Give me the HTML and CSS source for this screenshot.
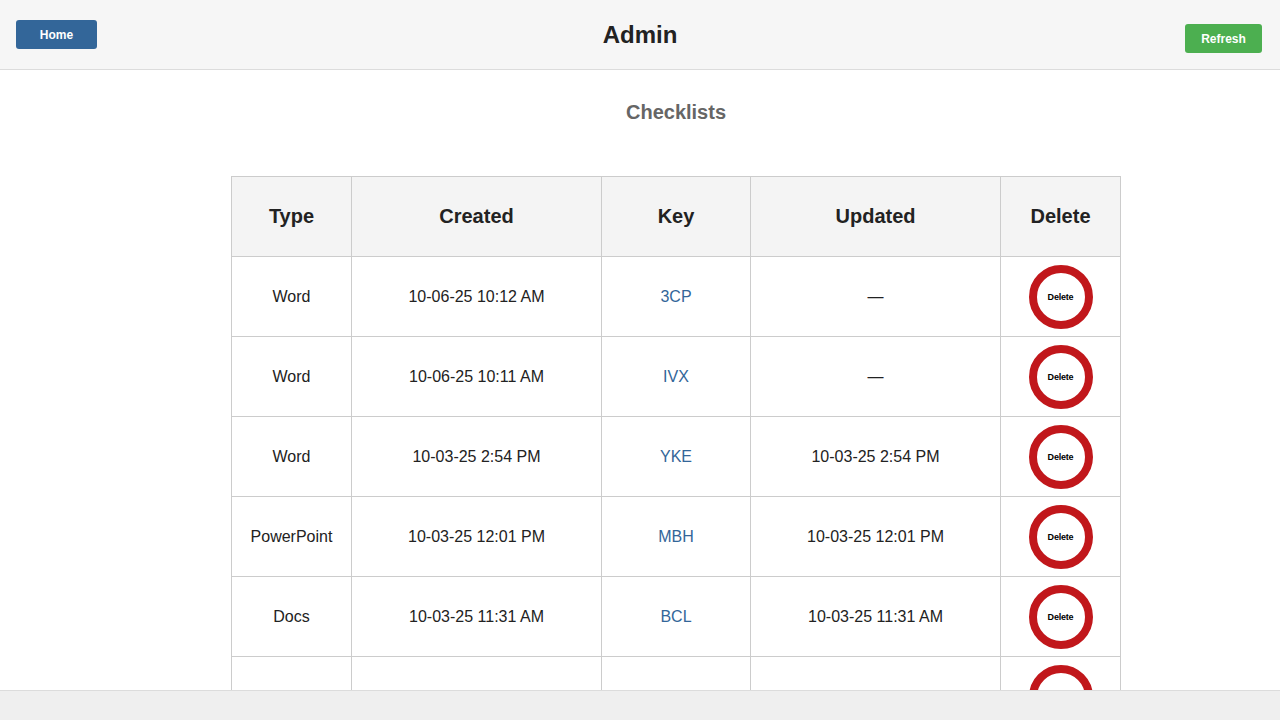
FILE: index.html
```html
<!DOCTYPE html>
<html>
<head>
<meta charset="utf-8">
<link rel="stylesheet" href="styles.css">
</head>
<body>
<header class="topbar">
  <button class="btn btn-home">Home</button>
  <h1 class="title">Admin</h1>
  <button class="btn btn-refresh">Refresh</button>
</header>
<main class="content">
  <h2 class="section-title">Checklists</h2>
  <table class="grid">
    <thead>
      <tr><th class="c-type">Type</th><th class="c-created">Created</th><th class="c-key">Key</th><th class="c-updated">Updated</th><th class="c-del">Delete</th></tr>
    </thead>
    <tbody>
      <tr><td>Word</td><td>10-06-25 10:12 AM</td><td class="key">3CP</td><td>—</td><td><button class="del">Delete</button></td></tr>
      <tr><td>Word</td><td>10-06-25 10:11 AM</td><td class="key">IVX</td><td>—</td><td><button class="del">Delete</button></td></tr>
      <tr><td>Word</td><td>10-03-25 2:54 PM</td><td class="key">YKE</td><td>10-03-25 2:54 PM</td><td><button class="del">Delete</button></td></tr>
      <tr><td>PowerPoint</td><td>10-03-25 12:01 PM</td><td class="key">MBH</td><td>10-03-25 12:01 PM</td><td><button class="del">Delete</button></td></tr>
      <tr><td>Docs</td><td>10-03-25 11:31 AM</td><td class="key">BCL</td><td>10-03-25 11:31 AM</td><td><button class="del">Delete</button></td></tr>
      <tr><td></td><td></td><td class="key"></td><td></td><td><button class="del">Delete</button></td></tr>
    </tbody>
  </table>
</main>
<footer class="footer"></footer>
</body>
</html>
```
FILE: styles.css
```css
* { box-sizing: border-box; }
html, body { margin: 0; padding: 0; }
body {
  font-family: "Liberation Sans", Arial, sans-serif;
  color: #222;
  background: #fff;
  height: 720px;
  overflow: hidden;
}
.topbar {
  height: 70px;
  background: #f6f6f6;
  border-bottom: 1px solid #dcdcdc;
  display: flex;
  align-items: flex-start;
  justify-content: space-between;
  padding: 0 18px 0 16px;
  position: relative;
}
.btn {
  border: none;
  border-radius: 3px;
  color: #fff;
  font-family: "Liberation Sans", Arial, sans-serif;
  font-weight: bold;
  font-size: 12px;
  height: 29px;
  padding: 0;
}
.btn-home { background: #336699; width: 81px; margin-top: 20px; }
.btn-refresh { background: #4caf50; width: 77px; margin-top: 24px; }
.title {
  margin: 0;
  position: absolute;
  left: 0; right: 0;
  top: 21px;
  text-align: center;
  font-size: 24px;
  font-weight: bold;
  color: #222;
  line-height: 28px;
  pointer-events: none;
}
.content {
  padding-left: 72px;
  display: flex;
  flex-direction: column;
  align-items: center;
}
.section-title {
  margin: 30px 0 52px;
  font-size: 20px;
  font-weight: bold;
  color: #666;
  line-height: 24px;
}
.grid {
  border-collapse: collapse;
  width: 889px;
  table-layout: fixed;
}
.grid th, .grid td {
  border: 1px solid #cccccc;
  text-align: center;
  vertical-align: middle;
  height: 80px;
  padding: 0;
}
.grid th {
  background: #f4f4f4;
  font-size: 20px;
  font-weight: bold;
  color: #222;
}
.grid td { font-size: 16px; color: #222; }
.c-type, .c-del { width: 120px; }
.c-created, .c-updated { width: 250px; }
.c-key { width: 149px; }
.grid td.key { color: #336699; }
.del {
  width: 64px;
  height: 64px;
  border-radius: 50%;
  border: 8px solid #c1171b;
  background: #fff;
  color: #000;
  font-family: "Liberation Sans", Arial, sans-serif;
  font-size: 9px;
  font-weight: bold;
  letter-spacing: -0.2px;
  padding: 0;
  display: inline-flex;
  align-items: center;
  justify-content: center;
  vertical-align: middle;
}
.footer {
  position: fixed;
  left: 0; right: 0; bottom: 0;
  height: 30px;
  background: #efefef;
  border-top: 1px solid #dcdcdc;
}
```
